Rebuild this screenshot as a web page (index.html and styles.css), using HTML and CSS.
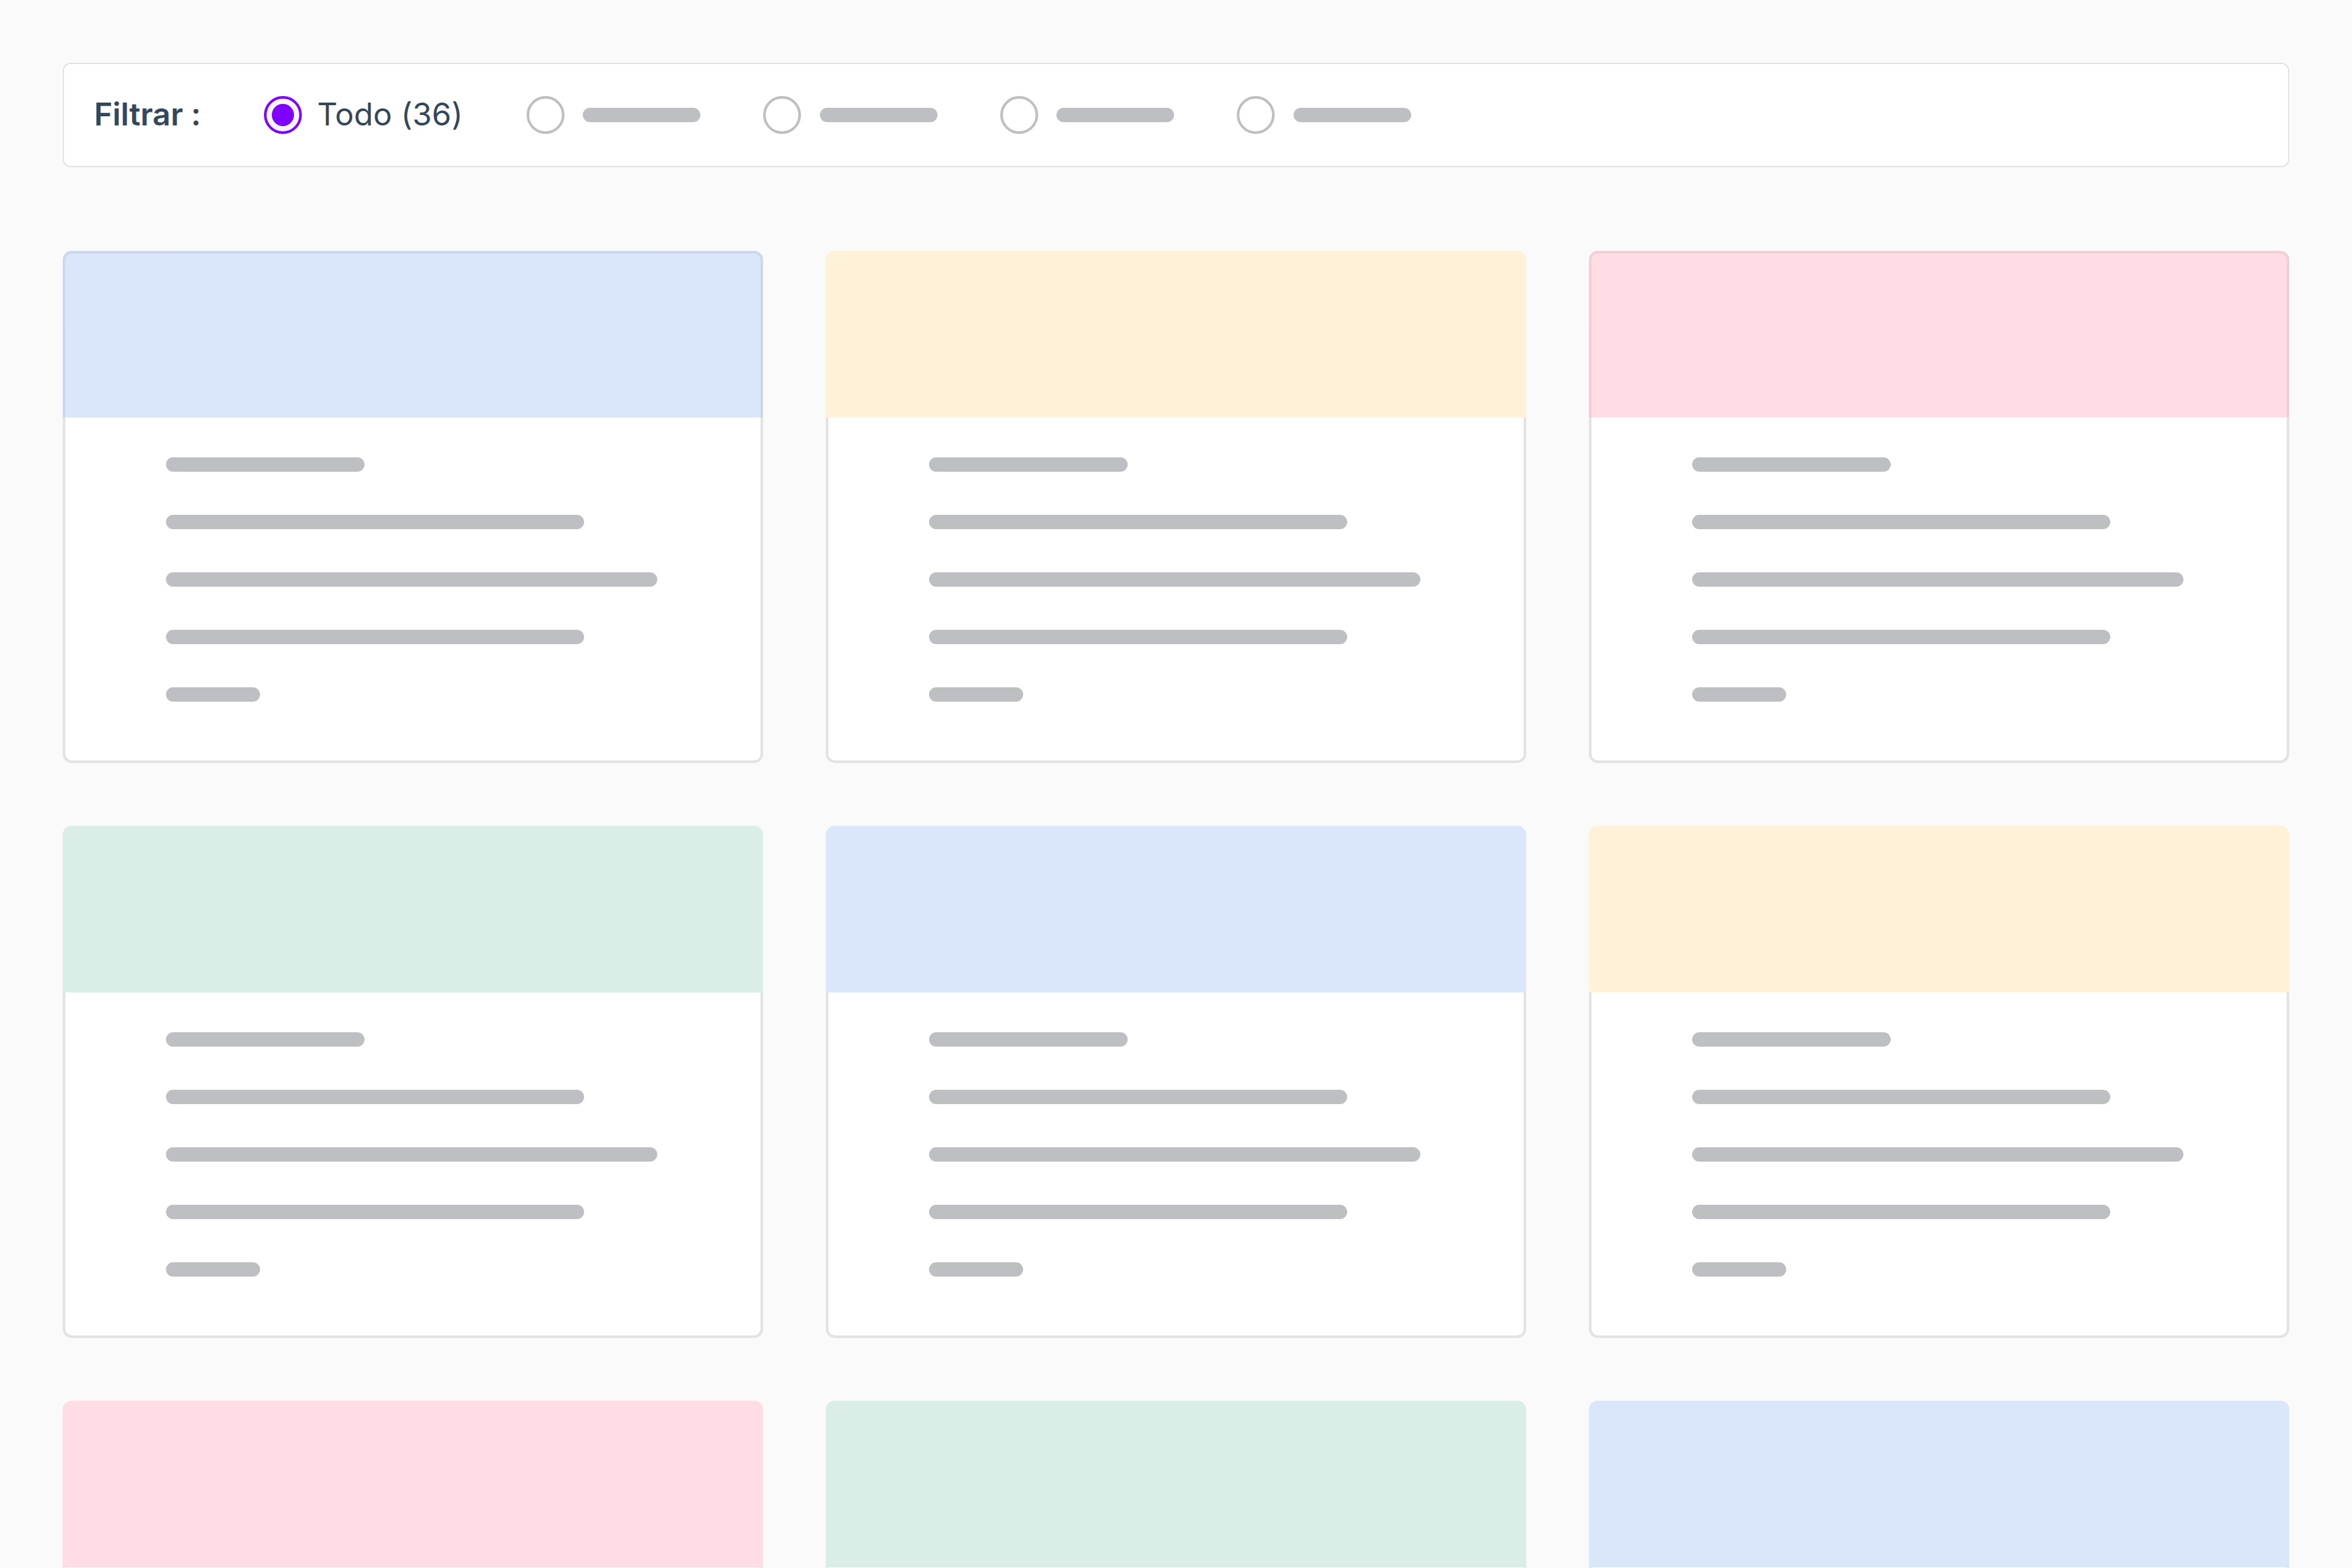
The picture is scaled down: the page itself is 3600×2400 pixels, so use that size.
FILE: index.html
```html
<!DOCTYPE html>
<html lang="es">
<head>
  <meta charset="UTF-8">
  <title>Filtrar</title>
  <link rel="stylesheet" href="styles.css">
</head>
<body>

  <!-- FILTER -->
  <div class="filter">
    <div class="filter-title">Filtrar :</div>
    <div class="option active">
      <span class="radio"></span>
      <span class="option-label">Todo (36)</span>
    </div>
    <div class="option"><span class="radio"></span><span class="line"></span></div>
    <div class="option"><span class="radio"></span><span class="line"></span></div>
    <div class="option"><span class="radio"></span><span class="line"></span></div>
    <div class="option"><span class="radio"></span><span class="line"></span></div>
  </div>

  <!-- CARDS -->
  <div class="cards" id="cards"></div>

  <script>
    const CARDS = [
      'blue outlined', 'yellow', 'pink outlined',
      'green', 'blue', 'yellow',
      'pink', 'green', 'blue'
    ];

    document.getElementById('cards').innerHTML = CARDS.map(color => `
      <div class="card">
        <div class="card-header ${color}"></div>
        <div class="card-body">
          <div class="line short"></div>
          <div class="line medium"></div>
          <div class="line long"></div>
          <div class="line medium"></div>
          <div class="line tiny"></div>
        </div>
      </div>
    `).join('');
  </script>

</body>
</html>
```
FILE: styles.css
```css
* {
  box-sizing: border-box;
}

body {
  margin: 0;
  padding: 96px 96px 0;
  background: #fafafa;
  font-family: Inter, 'Liberation Sans', sans-serif;
  color: #33475b;
}

.filter {
  display: flex;
  align-items: center;
  height: 160px;
  margin-bottom: 128px;
  padding-left: 46px;
  background: white;
  border: 2px solid #e3e3e3;
  border-radius: 12px;
  font-size: 48px;
  line-height: 58px;
}

.filter-title {
  width: 260px;
  padding-bottom: 3px;
  font-weight: 600;
}

.option {
  display: flex;
  align-items: center;
  width: 362.67px;
}

.option.active {
  width: 401.5px;
}

.option-label {
  padding-bottom: 3px;
  letter-spacing: 0.1px;
}

.radio {
  width: 58px;
  height: 58px;
  margin-right: 28.5px;
  border: 4px solid #bebfc3;
  border-radius: 50%;
}

.active .radio {
  display: flex;
  align-items: center;
  justify-content: center;
  margin-right: 23.5px;
  background: #f5f5f5;
  border-color: #7f00ff;
}

.active .radio::after {
  content: '';
  width: 34px;
  height: 34px;
  border-radius: 50%;
  background: #7f00ff;
}

.line {
  width: 180px;
  height: 21.67px;
  border-radius: 11px;
  background: #bebfc3;
}

.cards {
  display: grid;
  grid-template-columns: repeat(3, 1fr);
  grid-auto-rows: 784px;
  gap: 96px;
  height: calc(100vh - 384px);
  overflow: hidden;
}

.card {
  background: white;
  border-radius: 14px;
  box-shadow: inset 0 0 0 4px #e3e3e3;
}

.card-header {
  height: 255px;
  border-radius: 14px 14px 0 0;
}

.card-body {
  display: flex;
  flex-direction: column;
  gap: 66.33px;
  padding: 61px 158px;
}

.short {
  width: 304px;
}

.medium {
  width: 640px;
}

.long {
  width: 752px;
}

.tiny {
  width: 144px;
}

.blue {
  background: #dae6fa;
}

.yellow {
  background: #fff2d9;
}

.pink {
  background: #ffdde4;
}

.green {
  background: #daede6;
}

.outlined {
  border: 4px solid rgba(0, 0, 0, 0.06);
  border-bottom: none;
}
```
